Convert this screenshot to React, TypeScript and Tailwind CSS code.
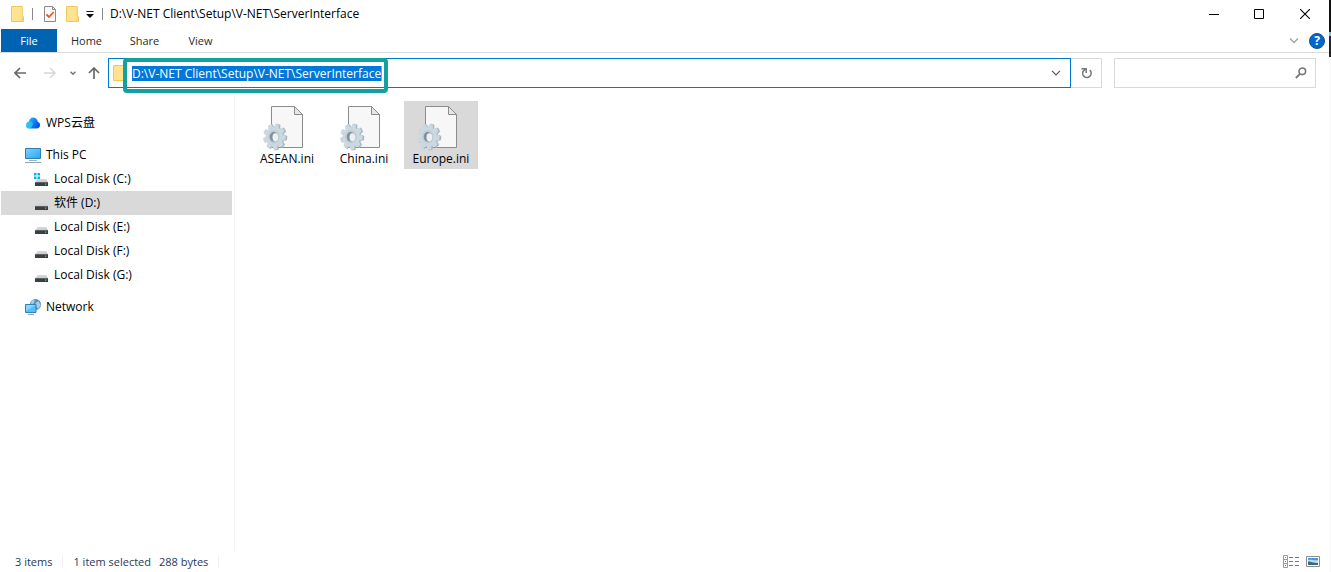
import { useState } from 'react'
import type { ReactNode } from 'react'

const folderPath = 'D:\\V-NET Client\\Setup\\V-NET\\ServerInterface'

const drives = [
  { name: 'Local Disk (C:)', system: true },
  { name: '软件 (D:)', system: false },
  { name: 'Local Disk (E:)', system: false },
  { name: 'Local Disk (F:)', system: false },
  { name: 'Local Disk (G:)', system: false },
]

const files = ['ASEAN.ini', 'China.ini', 'Europe.ini']

function FolderIcon() {
  return (
    <svg width="14" height="16" viewBox="0 0 14 16" className="shrink-0">
      <path d="M.5.5h10.8v10.2h1.2v4.8H.5z" fill="#ffe391" stroke="#edc95c" />
      <path d="M11 11.5v3.5" stroke="#edc95c" />
    </svg>
  )
}

function PropertiesIcon() {
  return (
    <svg width="12" height="16" viewBox="0 0 12 16">
      <path d="M.5.5h8l3 3v12H.5z" fill="#f8f8f8" stroke="#8a8a8a" />
      <path d="M8.5.5v3h3" fill="none" stroke="#8a8a8a" />
      <path d="M2.5 8.5 5 11l4.7-5" fill="none" stroke="#f0541e" strokeWidth="1.8" />
    </svg>
  )
}

function CloudIcon() {
  return (
    <svg width="16" height="16" viewBox="0 0 16 16">
      <defs>
        <linearGradient id="cloud" x1="0" y1="0" x2="1" y2="0.5">
          <stop offset="0" stopColor="#2fd4f0" />
          <stop offset="0.5" stopColor="#1593fb" />
          <stop offset="1" stopColor="#0a50e0" />
        </linearGradient>
      </defs>
      <path
        d="M4.5 13.500A3.500 3.500 0 0 1 1 10c0-1.800 1.200-3.200 3-3.500A4.600 4.600 0 0 1 8.200 2.500c2.500 0 4.200 1.700 4.500 4.200 1.500.4 2.400 1.700 2.400 3.300 0 2-1.500 3.500-3.500 3.500z"
        fill="url(#cloud)"
      />
      <path d="M4 6.500c2-.4 3.500.9 4 2.400l-2 4.600H4.500A3.500 3.500 0 0 1 1 10c0-1.800 1.200-3.200 3-3.500z" fill="#35dbe8" opacity=".6" />
    </svg>
  )
}

function ComputerIcon() {
  return (
    <svg width="16" height="16" viewBox="0 0 16 16">
      <defs>
        <linearGradient id="screen" x1="0" y1="0" x2="1" y2="1">
          <stop offset="0" stopColor="#7fd2ff" />
          <stop offset="1" stopColor="#2ba5f0" />
        </linearGradient>
      </defs>
      <path d="M.5 1.500h15v10H.5z" fill="url(#screen)" stroke="#2f7fae" />
      <path d="M4 13.500h8" stroke="#9fb3c2" />
      <path d="M0 15.500h16" stroke="#8ba4b8" />
    </svg>
  )
}

function DriveIcon({ system }: { system: boolean }) {
  return (
    <svg width="16" height="16" viewBox="0 0 16 16">
      <path d="M4.500 8h9l1.500 3.500H2.500z" fill="#d3d5d9" />
      <path d="M2 11h13v4H2z" fill="#3c3f42" />
      <path d="M2 11.300h13" stroke="#85898c" strokeWidth=".6" />
      <path d="M12 12.500h1.200v1.200H12z" fill="#39e639" />
      {system && <path d="M1 2h2.500v2.500H1zM4.500 2H7v2.500H4.500zM1 5.500h2.500V8H1zM4.500 5.500H7V8H4.500z" fill="#00b4f0" />}
    </svg>
  )
}

function NetworkIcon() {
  return (
    <svg width="16" height="16" viewBox="0 0 16 16">
      <circle cx="10.500" cy="5.500" r="5.500" fill="#5590b8" />
      <path d="M6.500 2c2-2 4-1 3 1L8 5 6 5zM10.500 4l3-2 2 4-2 4-2-2z" fill="#a9cfe0" />
      <path d="M.5 5.500h10.500v8H.5z" fill="#58bdf8" stroke="#2d83b8" />
      <path d="M1 6h9.500L1 12z" fill="#8bd4ff" />
      <path d="M3 15.500h6" stroke="#8aa5b8" />
    </svg>
  )
}

const teeth = [0, 40, 80, 120, 160, 200, 240, 280, 320]

function IniIcon() {
  return (
    <svg width="48" height="46" viewBox="0 0 48 46" aria-hidden="true">
      <path d="M8.500 1.500h23l8 8v33h-31z" fill="#f7f7f7" stroke="#8c8c8c" />
      <path d="M31.500 1.500v8h8z" fill="#e6e6e6" stroke="#8c8c8c" />
      <g transform="translate(12.5 32) scale(.88 1)">
        <g fill="#a9b8c4">
          {teeth.map((a) => (
            <path key={a} d="M-2.200-13.300h4.400l1 4.500h-6.400z" transform={`rotate(${a + 15})`} />
          ))}
          <circle r="10" />
        </g>
      </g>
      <g transform="translate(11.3 31.700) scale(.86 1)">
        <g fill="#ccd8e0">
          {teeth.map((a) => (
            <path key={a} d="M-2-13h4l1.200 4.500h-6.400z" transform={`rotate(${a + 15})`} />
          ))}
          <circle r="9.800" />
        </g>
      </g>
      <ellipse cx="11" cy="31.800" rx="5.800" ry="6.800" fill="#c0cdd7" />
      <ellipse cx="10.700" cy="31.800" rx="4" ry="4.800" fill="#7f909e" />
      <ellipse cx="12.300" cy="32.200" rx="2.800" ry="4" fill="#eef1f3" />
    </svg>
  )
}

function TreeItem({ icon, label, nested, active, onClick }: {
  icon: ReactNode
  label: string
  nested?: boolean
  active?: boolean
  onClick?: () => void
}) {
  return (
    <button
      onClick={onClick}
      className={`flex h-6 w-full items-center gap-[5px] text-left ${nested ? 'pl-8' : 'pl-6'} ${active ? 'bg-[#d9d9d9]' : ''}`}
    >
      <span className="flex w-4 shrink-0">{icon}</span>
      <span>{label}</span>
    </button>
  )
}

export default function App() {
  const [drive, setDrive] = useState('软件 (D:)')
  const [selected, setSelected] = useState('Europe.ini')
  const [path, setPath] = useState(folderPath)

  return (
    <div className="flex min-h-screen bg-white font-['Open_Sans','Noto_Sans_CJK_SC',sans-serif] text-[12px] leading-4 text-black">
      <div className="flex min-w-0 flex-1 flex-col">
        {/* title bar */}
        <header className="flex h-7 items-center pl-[11px]">
          <FolderIcon />
          <span className="ml-[7px] h-3 w-px bg-[#8a8a8a]" />
          <button aria-label="Properties" className="ml-[11px]"><PropertiesIcon /></button>
          <button aria-label="New folder" className="ml-2.5"><FolderIcon /></button>
          <button aria-label="Customize toolbar" className="ml-1.5">
            <svg width="8" height="8" viewBox="0 0 8 8">
              <path d="M.5 1.500h7" stroke="#111" />
              <path d="M0 4h8L4 8z" fill="#111" />
            </svg>
          </button>
          <span className="ml-2 h-3 w-px bg-[#8a8a8a]" />
          <h1 className="ml-[7px]">{folderPath}</h1>
          <div className="ml-auto flex">
            <button aria-label="Minimize" className="flex w-[46px] justify-center">
              <svg width="10" height="10" viewBox="0 0 10 10"><path d="M0 5.500h10" stroke="#000" /></svg>
            </button>
            <button aria-label="Maximize" className="flex w-11 justify-center">
              <svg width="10" height="10" viewBox="0 0 10 10"><path d="M.5.5h9v9h-9z" fill="none" stroke="#000" /></svg>
            </button>
            <button aria-label="Close" className="flex w-12 justify-center">
              <svg width="10" height="10" viewBox="0 0 10 10"><path d="m0 0 10 10M10 0 0 10" stroke="#000" strokeWidth="1.100" /></svg>
            </button>
          </div>
        </header>

        {/* ribbon tabs */}
        <nav className="flex h-[25px] items-stretch border-b border-[#dadbdc] pt-px pl-px text-[11px] text-[#2b2b2b]">
          <button className="w-14 bg-[#0063b1] text-white">File</button>
          <button className="ml-0.5 w-[55px]">Home</button>
          <button className="ml-0.5 w-[57px]">Share</button>
          <button className="w-[55px]">View</button>
          <div className="ml-auto flex items-center gap-2.5 pr-1">
            <button aria-label="Expand ribbon">
              <svg width="10" height="6" viewBox="0 0 10 6"><path d="m1 .5 4 4 4-4" fill="none" stroke="#a0a0a0" strokeWidth="1.300" /></svg>
            </button>
            <button aria-label="Help" className="flex size-4 items-center justify-center rounded-full border border-[#174f8c] bg-[#0067cf] text-[12px] font-bold text-white">?</button>
          </div>
        </nav>

        {/* navigation and address */}
        <div className="flex items-center pt-[5px] pr-[13px]">
          <div className="flex w-[108px] shrink-0 items-center pl-3.5">
            <button aria-label="Back">
              <svg width="12" height="12" viewBox="0 0 12 12"><path d="M12 6H1M6 1 1 6l5 5" fill="none" stroke="#686868" strokeWidth="1.700" /></svg>
            </button>
            <button aria-label="Forward" className="ml-[18px]">
              <svg width="12" height="12" viewBox="0 0 12 12"><path d="M0 6h11M6 1l5 5-5 5" fill="none" stroke="#d8d8d8" strokeWidth="1.500" /></svg>
            </button>
            <button aria-label="Recent locations" className="ml-3.5">
              <svg width="6" height="5" viewBox="0 0 6 5"><path d="m.5.800 2.500 2.500L5.500.800" fill="none" stroke="#777" strokeWidth="1.500" /></svg>
            </button>
            <button aria-label="Up" className="ml-3">
              <svg width="12" height="12" viewBox="0 0 12 12"><path d="M6 12V1M1 6l5-5 5 5" fill="none" stroke="#686868" strokeWidth="1.700" /></svg>
            </button>
          </div>
          <div className="relative flex h-[30px] flex-1 items-center border border-[#0078d7] pl-1">
            <FolderIcon />
            <input
              aria-label="Address"
              value={path}
              onChange={(e) => setPath(e.target.value)}
              className="mt-px ml-[5px] field-sizing-content h-[15px] bg-[#0078d7] text-white outline-none"
            />
            <span className="mt-px h-[15px] w-px bg-[#ff8728]" />
            {/* highlight around the path */}
            <span className="pointer-events-none absolute -top-px left-3.5 h-[35px] w-[265px] rounded-[4px] border-4 border-[#13a19f]" />
            <button aria-label="Previous locations" className="mr-[9px] ml-auto">
              <svg width="10" height="6" viewBox="0 0 10 6"><path d="m1 .800 4 4 4-4" fill="none" stroke="#555" strokeWidth="1.200" /></svg>
            </button>
          </div>
          <button aria-label="Refresh" className="flex h-[30px] w-[31px] items-center justify-center border border-l-0 border-[#d9d9d9]">
            <svg width="12" height="12" viewBox="0 0 12 12">
              <path d="M9.800 3.200A4.200 4.200 0 1 1 3.500 3.800L5.500 2" fill="none" stroke="#777" strokeWidth="1.600" />
              <path d="M1.500 1.700h4.700v4.300" fill="none" stroke="#777" strokeWidth="1.500" />
            </svg>
          </button>
          <label className="ml-3 flex h-[30px] w-[202px] items-center border border-[#d9d9d9] pr-2">
            <input aria-label="Search" className="min-w-0 flex-1 pl-2 outline-none" />
            <svg width="12" height="12" viewBox="0 0 12 12">
              <circle cx="7.300" cy="4.300" r="3.300" fill="none" stroke="#777" strokeWidth="1.600" />
              <path d="M5 6.800.800 11" stroke="#777" strokeWidth="1.800" />
            </svg>
          </label>
        </div>

        <div className="flex flex-1 pt-[7px]">
          <aside className="w-[235px] shrink-0 border-r border-[#f4f4f4] pt-4 pr-0.5 pl-px">
            <TreeItem icon={<CloudIcon />} label="WPS云盘" />
            <div className="my-2">
              <TreeItem icon={<ComputerIcon />} label="This PC" />
              {drives.map((d) => (
                <TreeItem
                  key={d.name}
                  icon={<DriveIcon system={d.system} />}
                  label={d.name}
                  nested
                  active={drive === d.name}
                  onClick={() => setDrive(d.name)}
                />
              ))}
            </div>
            <TreeItem icon={<NetworkIcon />} label="Network" />
          </aside>
          <main className="flex flex-1 items-start gap-[3px] pt-1.5 pl-[15px]">
            {files.map((name) => (
              <button
                key={name}
                onClick={() => setSelected(name)}
                className={`flex h-[68px] w-[74px] flex-col items-center pt-1 ${selected === name ? 'bg-[#d9d9d9]' : ''}`}
              >
                <IniIcon />
                <span>{name}</span>
              </button>
            ))}
          </main>
        </div>

        {/* status bar */}
        <footer className="flex h-[21px] items-center pl-[15px] text-[11px] text-[#1e395b]">
          <span>3 items</span>
          <span className="ml-2.5 h-3 w-px bg-[#f0f0f0]" />
          <span className="ml-2.5">1 item selected</span>
          <span className="ml-2">288 bytes</span>
          <span className="ml-2.5 h-3 w-px bg-[#f0f0f0]" />
          <div className="mr-[9px] ml-auto flex items-center gap-1.5">
            <button aria-label="Details view">
              <svg width="17" height="13" viewBox="0 0 17 13">
                <path d="M.5.5h4v12h-4zM.5 4.500h4M.5 8.500h4" fill="#fff" stroke="#999" />
                <path d="M6 2.500h4M12 2.500h4M6 6.500h4M12 6.500h4M6 10.500h4M12 10.500h4" stroke="#777" />
                <path d="M2 2h1v1H2zM2 6h1v1H2z" fill="#3f87d9" />
                <path d="M2 10h1v1H2z" fill="#d33" />
              </svg>
            </button>
            <button aria-label="Large icons view">
              <svg width="14" height="11" viewBox="0 0 14 11">
                <path d="M.5.5h13v10H.5z" fill="#fff" stroke="#8c8c8c" />
                <path d="M2 2h10v7H2z" fill="#4e91dc" />
                <path d="M2 4c3-1 6 1 10 0v3H2z" fill="#b9dbf3" />
                <path d="M2 5.500c3 0 5 1.500 10 1.500v2H2z" fill="#366e78" />
              </svg>
            </button>
          </div>
        </footer>
      </div>

      {/* sliver of the window behind */}
      <div className="w-0.5 bg-[#fafafa]">
        <div className="h-8 bg-[#111]" />
        <div className="h-1 bg-[#6fc4d8]" />
        <div className="h-1.5 bg-[#1c1c6e]" />
        <div className="h-[15px] bg-[#222]" />
      </div>
    </div>
  )
}
